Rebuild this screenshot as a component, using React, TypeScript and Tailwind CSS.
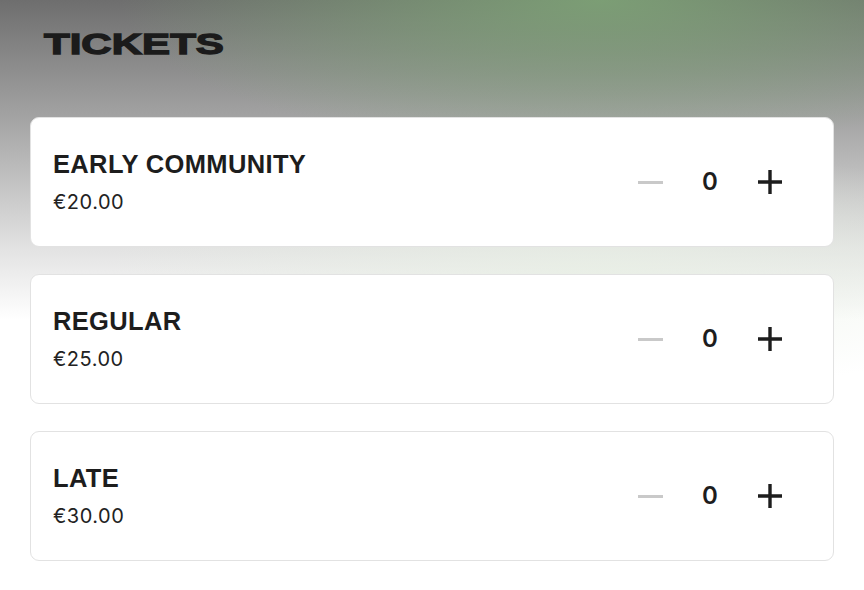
import { useState } from "react";

// Ticket tiers shown in the list
const tickets = [
  { name: "EARLY COMMUNITY", price: "€20.00" },
  { name: "REGULAR", price: "€25.00" },
  { name: "LATE", price: "€30.00" },
];

const TicketRow = ({ name, price }: { name: string; price: string }) => {
  const [count, setCount] = useState(0);

  return (
    <div className="flex h-[130px] items-center justify-between rounded-[9px] border border-[#e2e2e2] bg-white pl-[22px] pr-[50px]">
      <div className="flex flex-col">
        <span className="font-['Liberation_Sans',sans-serif] text-[25.5px] font-bold leading-none tracking-[0.35px] text-[#1d1d1d]">
          {name}
        </span>
        <span className="mt-[15px] font-['Inter',sans-serif] text-[20px] leading-none tracking-[0.5px] text-[#222]">
          {price}
        </span>
      </div>

      <div className="flex items-center">
        <button
          onClick={() => setCount((c) => Math.max(0, c - 1))}
          className="flex h-[26px] w-[26px] items-center justify-center"
        >
          <span className="block h-[3px] w-[25px] bg-[#c9c9c9]" />
        </button>
        <span className="ml-[38px] w-[18px] text-center font-['Inter',sans-serif] text-[24px] font-semibold leading-none text-[#1d1d1d]">
          {count}
        </span>
        <button
          onClick={() => setCount((c) => c + 1)}
          className="ml-[38px] flex h-[26px] w-[26px] items-center justify-center"
        >
          <svg width="26" height="26" viewBox="0 0 26 26">
            <path d="M13 1v24M1 13h24" stroke="#1d1d1d" strokeWidth="3.4" />
          </svg>
        </button>
      </div>
    </div>
  );
};

export default function App() {
  return (
    <div className="min-h-[590px] w-full bg-[radial-gradient(ellipse_480px_150px_at_600px_0px,rgba(126,166,118,0.85),rgba(126,166,118,0)),radial-gradient(ellipse_500px_120px_at_600px_270px,rgba(232,240,228,0.7),rgba(232,240,228,0)),linear-gradient(to_bottom,#6e6e6e_0px,#a2a2a2_115px,#e3e3e3_250px,#ffffff_320px)] px-[30px] pt-[29px]">
      <h1 className="ml-[14px] inline-block origin-left scale-x-[1.45] font-['Liberation_Sans',sans-serif] text-[29px] font-bold leading-[31px] text-[#1b1b1b] [-webkit-text-stroke:1.3px_#1b1b1b]">
        TICKETS
      </h1>

      <div className="mt-[57px] flex flex-col gap-[27px]">
        {tickets.map((t) => (
          <TicketRow key={t.name} name={t.name} price={t.price} />
        ))}
      </div>
    </div>
  );
}
